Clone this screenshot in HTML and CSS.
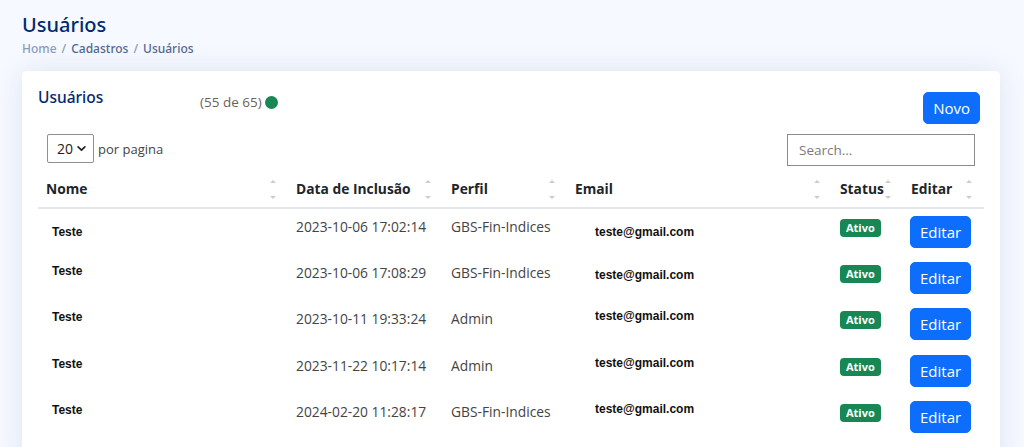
FILE: index.html
```html
<!DOCTYPE html>
<html lang="pt-BR">
<head>
	<meta charset="UTF-8">
	<meta name="viewport" content="width=device-width, initial-scale=1.0">
	<title>Usuários</title>
	<link rel="stylesheet" href="styles.css">
</head>
<body>
	<main id="main">
		<div class="pagetitle">
			<h1>Usuários</h1>
			<nav class="breadcrumb">
				<a href="#">Home</a>
				<span class="sep">/</span>
				<span>Cadastros</span>
				<span class="sep">/</span>
				<span class="active">Usuários</span>
			</nav>
		</div>

		<section class="card">
			<div class="card-head">
				<h5 class="card-title">Usuários</h5>
				<span class="count">(55 de 65) <i class="dot"></i></span>
				<button class="btn btn-primary btn-new">Novo</button>
			</div>

			<div class="dt-top">
				<label class="per-page">
					<span class="select-wrap">
						<select>
							<option>5</option>
							<option>10</option>
							<option selected>20</option>
							<option>50</option>
						</select>
						<svg viewBox="0 0 16 16" width="9" height="9"><path d="M2 5l6 6 6-6" fill="none" stroke="#222" stroke-width="3" stroke-linecap="round" stroke-linejoin="round"/></svg>
					</span>
					por pagina
				</label>
				<input class="search" type="text" placeholder="Search...">
			</div>

			<table class="users">
				<thead>
					<tr>
						<th class="col-name sorter">Nome</th>
						<th class="col-date sorter">Data de Inclusão</th>
						<th class="col-profile sorter">Perfil</th>
						<th class="col-email sorter">Email</th>
						<th class="col-status sorter">Status</th>
						<th class="col-edit sorter">Editar</th>
					</tr>
				</thead>
				<tbody>
					<tr>
						<td><b class="name first">Teste</b></td>
						<td>2023-10-06 17:02:14</td>
						<td>GBS-Fin-Indices</td>
						<td><b class="email first">teste@gmail.com</b></td>
						<td><span class="badge">Ativo</span></td>
						<td><button class="btn btn-primary">Editar</button></td>
					</tr>
					<tr>
						<td><b class="name">Teste</b></td>
						<td>2023-10-06 17:08:29</td>
						<td>GBS-Fin-Indices</td>
						<td><b class="email second">teste@gmail.com</b></td>
						<td><span class="badge">Ativo</span></td>
						<td><button class="btn btn-primary">Editar</button></td>
					</tr>
					<tr>
						<td><b class="name">Teste</b></td>
						<td>2023-10-11 19:33:24</td>
						<td>Admin</td>
						<td><b class="email">teste@gmail.com</b></td>
						<td><span class="badge">Ativo</span></td>
						<td><button class="btn btn-primary">Editar</button></td>
					</tr>
					<tr>
						<td><b class="name">Teste</b></td>
						<td>2023-11-22 10:17:14</td>
						<td>Admin</td>
						<td><b class="email">teste@gmail.com</b></td>
						<td><span class="badge">Ativo</span></td>
						<td><button class="btn btn-primary">Editar</button></td>
					</tr>
					<tr>
						<td><b class="name">Teste</b></td>
						<td>2024-02-20 11:28:17</td>
						<td>GBS-Fin-Indices</td>
						<td><b class="email">teste@gmail.com</b></td>
						<td><span class="badge">Ativo</span></td>
						<td><button class="btn btn-primary">Editar</button></td>
					</tr>
				</tbody>
			</table>
		</section>
	</main>
</body>
</html>
```

FILE: styles.css
```css
* { box-sizing: border-box; }

body {
	margin          : 0;
	font-family     : 'Open Sans', 'Noto Sans', sans-serif;
	font-size       : 14px;
	color           : #444444;
	background-color: #f6f9ff;
	overflow        : hidden;
}

#main { padding: 12px 24px 0 22px; }

.pagetitle h1 {
	margin     : 0;
	font-family: 'Noto Sans', 'Open Sans', sans-serif;
	font-size  : 20px;
	font-weight: 500;
	line-height: 26px;
	color      : #012970;
}

.breadcrumb {
	display    : flex;
	gap        : 5px;
	margin-top : 2px;
	font-family: 'Noto Sans', 'Open Sans', sans-serif;
	font-size  : 12px;
	font-weight: 500;
	color      : #51678f;
}

.breadcrumb a {
	color          : #899bbd;
	text-decoration: none;
}

.breadcrumb .sep { color: #899bbd; }

.card {
	margin          : 14px 0 0;
	padding         : 16px 16px 20px;
	background-color: #ffffff;
	border-radius   : 5px;
	box-shadow      : 0 0 30px rgba(1, 41, 112, 0.1);
	width           : 978px;
	height          : 400px;
}

.card-head {
	display    : flex;
	align-items: flex-start;
}

.card-title {
	margin     : 0;
	width      : 162px;
	font-family: 'Noto Sans', 'Open Sans', sans-serif;
	font-size  : 15.5px;
	font-weight: 500;
	line-height: 20px;
	color      : #012970;
}

.count {
	display    : flex;
	align-items: center;
	gap        : 3px;
	margin-top : 5px;
	font-size  : 13.5px;
	line-height: 20px;
	color      : #6c6257;
}

.dot {
	display         : inline-block;
	width           : 13px;
	height          : 13px;
	border-radius   : 50%;
	background-color: #198754;
}

.btn {
	font-family  : 'Open Sans', 'Noto Sans', sans-serif;
	font-size    : 15px;
	line-height  : 22px;
	padding      : 4px 9px;
	border       : 1px solid transparent;
	border-radius: 5px;
	cursor       : pointer;
}

.btn-primary {
	color           : #ffffff;
	background-color: #0d6efd;
	border-color    : #0d6efd;
}

.btn-new {
	margin-left : auto;
	margin-top  : 5px;
	margin-right: 4px;
}

.dt-top {
	display        : flex;
	justify-content: space-between;
	align-items    : flex-start;
	margin-top     : 10px;
	padding        : 0 9px;
}

.per-page {
	display    : flex;
	align-items: center;
	gap        : 4px;
	height     : 29px;
	font-size  : 13px;
	color      : #444444;
}

.select-wrap { position: relative; }

.select-wrap select {
	appearance   : none;
	width        : 47px;
	height       : 29px;
	padding      : 0 0 0 9px;
	font-family  : 'Open Sans', 'Noto Sans', sans-serif;
	font-size    : 14px;
	color        : #222222;
	background   : #ffffff;
	border       : 1px solid #8f8f8f;
	border-radius: 2px;
}

.select-wrap svg {
	position      : absolute;
	right         : 8px;
	top           : 10px;
	pointer-events: none;
}

.search {
	width        : 188px;
	height       : 32px;
	padding      : 0 11px;
	font-family  : 'Open Sans', 'Noto Sans', sans-serif;
	font-size    : 13.5px;
	border       : 1px solid #8a8a8a;
	border-radius: 0;
	outline      : none;
}

.search::placeholder { color: #7a7a7a; }

.users {
	width          : 946px;
	margin-top     : 4px;
	border-collapse: collapse;
	table-layout   : fixed;
}

.users th {
	position     : relative;
	padding      : 8px 8px;
	height       : 37px;
	text-align   : left;
	font-weight  : 700;
	font-size    : 13.8px;
	line-height  : 21px;
	color        : #212529;
	border-bottom: 2px solid #e3e6ea;
}

.sorter::before,
.sorter::after {
	content     : '';
	position    : absolute;
	right       : 12px;
	border-left : 3px solid transparent;
	border-right: 3px solid transparent;
	opacity     : 0.2;
}

.sorter::before {
	top          : 10px;
	border-bottom: 3px solid #000;
}

.sorter::after {
	bottom    : 8px;
	border-top: 3px solid #000;
}

.col-name    { width: 250px; }
.col-date    { width: 155px; }
.col-profile { width: 124px; }
.col-email   { width: 265px; }
.col-status  { width: 71px; }
.col-edit    { width: 81px; }

.users td {
	padding       : 7px 8px 6px;
	height        : 46.5px;
	vertical-align: top;
	font-size     : 13.8px;
	line-height   : 21px;
	color         : #444444;
	white-space   : nowrap;
}

.name,
.email {
	display    : block;
	font-family: 'Liberation Sans', Arial, sans-serif;
	font-size  : 12px;
	line-height: 16px;
	color      : #111111;
}

.name  { padding: 1px 0 0 6px; }
.email { padding: 0 0 0 20px; }

.name.first,
.email.first  { padding-top: 8px; }
.email.second { padding-top: 5px; }

.badge {
	display         : inline-block;
	margin-top      : 3px;
	padding         : 3px 6px;
	font-family     : 'Open Sans', 'Noto Sans', sans-serif;
	font-size       : 11px;
	font-weight     : 700;
	line-height     : 12px;
	color           : #ffffff;
	background-color: #198754;
	border-radius   : 4px;
}

.users td .btn { margin-left: -1px; }
```
